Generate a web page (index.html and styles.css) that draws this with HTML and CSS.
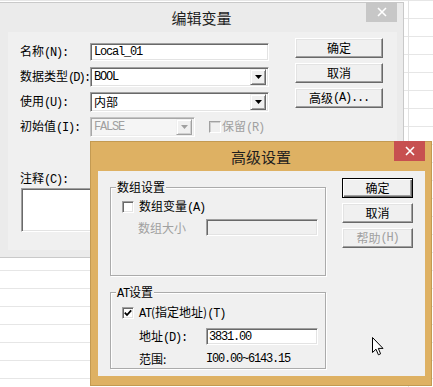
FILE: index.html
```html
<!DOCTYPE html>
<html lang="zh-CN">
<head>
<meta charset="utf-8">
<title>编辑变量</title>
<link rel="stylesheet" href="styles.css">
</head>
<body>
<div class="win win1">
  <div class="titlebar">
    <span class="title">编辑变量</span>
    <span class="close close-gray"><svg width="10" height="10" viewBox="0 0 10 10"><path d="M1 1L9 9M9 1L1 9" stroke="#fff" stroke-width="1.6"/></svg></span>
  </div>
  <div class="client c1">
    <div class="form">
      <div class="row">
        <span class="lbl">名称<span class="m">(N):</span></span>
        <div class="edit sunken w179"><span class="m">Local_01</span></div>
      </div>
      <div class="row">
        <span class="lbl">数据类型<span class="m tight">(D):</span></span>
        <div class="combo sunken w179"><span class="val m">BOOL</span><span class="dd"><svg width="7" height="4" viewBox="0 0 7 4"><path d="M0 0H7L3.5 4Z" fill="#000"/></svg></span></div>
      </div>
      <div class="row">
        <span class="lbl">使用<span class="m">(U):</span></span>
        <div class="combo sunken w179"><span class="val">内部</span><span class="dd"><svg width="7" height="4" viewBox="0 0 7 4"><path d="M0 0H7L3.5 4Z" fill="#000"/></svg></span></div>
      </div>
      <div class="row">
        <span class="lbl">初始值<span class="m">(I):</span></span>
        <div class="combo sunken disabled w105"><span class="val m">FALSE</span><span class="dd dd-dis"><svg width="7" height="4" viewBox="0 0 7 4"><path d="M0 0H7L3.5 4Z" fill="#a0a0a0"/></svg></span></div>
        <span class="chk-dis"></span><span class="dis">保留<span class="m">(R)</span></span>
      </div>
      <div class="note-lbl">注释<span class="m">(C):</span></div>
      <div class="memo sunken"></div>
    </div>
    <div class="btns b1">
      <div class="btn">确定</div>
      <div class="btn">取消</div>
      <div class="btn">高级<span class="m">(A)...</span></div>
    </div>
  </div>
</div>

<div class="win win2">
  <div class="titlebar">
    <span class="title">高级设置</span>
    <span class="close close-red"><svg width="10" height="10" viewBox="0 0 10 10"><path d="M1 1L9 9M9 1L1 9" stroke="#fff" stroke-width="1.6"/></svg></span>
  </div>
  <div class="client c2">
    <div class="groups">
      <div class="grp grp1">
        <div class="legend">数组设置</div>
        <div class="grow g1r1">
          <span class="chk sunken"></span><span>数组变量<span class="m">(A)</span></span>
        </div>
        <div class="grow g1r2">
          <span class="glbl dis">数组大小</span>
          <div class="edit sunken edit-dis w112"></div>
        </div>
      </div>
      <div class="grp grp2">
        <div class="legend"><span class="m">AT</span>设置</div>
        <div class="grow g2r1">
          <span class="chk sunken"><svg width="8" height="8" viewBox="0 0 8 8"><path d="M0.8 3.6L3 6L7.2 1.4" fill="none" stroke="#000" stroke-width="1.8"/></svg></span><span><span class="m">AT</span>(指定地址)<span class="m">(T)</span></span>
        </div>
        <div class="grow g2r2">
          <span class="glbl2">地址<span class="m">(D):</span></span>
          <div class="edit sunken w112"><span class="m">3831.00</span></div>
        </div>
        <div class="grow g2r3">
          <span class="glbl2">范围:</span>
          <span class="m">I00.00~6143.15</span>
        </div>
      </div>
    </div>
    <div class="btns b2">
      <div class="btn def">确定</div>
      <div class="btn">取消</div>
      <div class="btn dis">帮助<span class="m">(H)</span></div>
    </div>
  </div>
</div>

<svg class="cursor" width="12" height="19" viewBox="0 0 12 19"><path d="M0.5 0.5V15.5L4 12.2L6.4 17.8L8.6 16.8L6.3 11.4H11Z" fill="#fff" stroke="#000" stroke-width="1" stroke-linejoin="miter"/></svg>
</body>
</html>
```

FILE: styles.css
```css
* { box-sizing: border-box; }
html, body { margin: 0; padding: 0; }
body {
  width: 433px;
  height: 387px;
  overflow: hidden;
  position: relative;
  background-color: #fff;
  background-image:
    linear-gradient(to right, transparent 408px, #e2e2e2 408px, #e2e2e2 409px, transparent 409px),
    repeating-linear-gradient(to bottom, #e6e6e6 0, #e6e6e6 1px, transparent 1px, transparent 18px);
  font-family: "Noto Sans CJK SC", "Noto Sans", sans-serif;
  font-size: 12px;
  line-height: 14px;
  color: #000;
}
.m { font-family: "Liberation Mono", monospace; letter-spacing: -1.2px; }
.m.tight { letter-spacing: -1.9px; }

.win { position: absolute; display: flex; flex-direction: column; }
.win1 { left: -1px; top: 2px; width: 405px; height: 256px; background: #ebebeb; border: 1px solid #c9c9c9; }
.win2 { left: 90px; top: 141px; width: 342px; height: 245px; background: #deb163; border: 1px solid #c39a52; }

.titlebar { height: 29px; flex: none; position: relative; display: flex; align-items: center; justify-content: center; }
.title { font-size: 15px; line-height: 20px; color: #1e1e1e; }
.close { position: absolute; top: -1px; right: 6px; width: 31px; height: 20px; display: flex; align-items: center; justify-content: center; }
.close-gray { background: #c7c7c7; }
.close-red { background: #c75050; }

.client { flex: 1; background: #f0f0f0; display: flex; align-items: flex-start; }
.c1 { margin: 0 6px 7px 8px; padding: 6px 0 0 12px; }
.c2 { margin: 0 6px 9px 7px; padding: 7px 0 0 12px; }

.form { width: 257px; flex: none; padding-top: 4px; }
.row { display: flex; align-items: center; height: 20px; margin-bottom: 5px; white-space: nowrap; }
.lbl { width: 70px; flex: none; position: relative; z-index: 1; }

.sunken {
  border: 1px solid;
  border-color: #a0a0a0 #fff #fff #a0a0a0;
  box-shadow: inset 1px 1px 0 #696969, inset -1px -1px 0 #e3e3e3;
}
.edit { height: 18px; background: #fff; padding-left: 3px; display: flex; align-items: center; flex: none; }
.edit-dis { background: #f0f0f0; height: 17px; }
.combo { height: 20px; background: #fff; display: flex; align-items: center; padding: 1px 2px 1px 1px; flex: none; }
.combo .val { flex: 1; padding-left: 2px; }
.combo.disabled { background: #f5f5f5; color: #a0a0a0; border-color: #c4c4c4 #fff #fff #c4c4c4; box-shadow: inset 1px 1px 0 #a8a8a8, inset -1px -1px 0 #ececec; }
.dd {
  width: 16px; height: 16px; flex: none;
  background: #f0f0f0;
  border: 1px solid;
  border-color: #f0f0f0 #696969 #696969 #f0f0f0;
  box-shadow: inset 1px 1px 0 #fff, inset -1px -1px 0 #a0a0a0;
  display: flex; align-items: center; justify-content: center;
}
.dd-dis { border-color: #f0f0f0 #a0a0a0 #a0a0a0 #f0f0f0; box-shadow: inset 1px 1px 0 #fff, inset -1px -1px 0 #d0d0d0; }
.w179 { width: 179px; }
.w105 { width: 105px; }
.w112 { width: 112px; }

.chk-dis {
  width: 12px; height: 12px; flex: none;
  margin-left: 14px; margin-right: 1px;
  border-top: 1px solid #a0a0a0; border-left: 1px solid #a0a0a0;
  border-right: 1px solid #fff; border-bottom: 1px solid #fff;
  box-shadow: inset 1px 1px 0 #cfcfcf;
}
.dis { color: #a0a0a0; }

.note-lbl { margin-top: 34px; height: 14px; white-space: nowrap; }
.memo { margin: 3px 0 0 1px; width: 250px; height: 44px; background: #fff; }

.btns { display: flex; flex-direction: column; gap: 5px; flex: none; }
.b1 { margin-left: 18px; }
.b2 { margin-left: 16px; }
.btn {
  width: 88px; height: 20px;
  background: #f0f0f0;
  border: 1px solid;
  border-color: #fff #696969 #696969 #fff;
  box-shadow: inset -1px -1px 0 #a0a0a0, inset 1px 1px 0 #e3e3e3;
  display: flex; align-items: center; justify-content: center;
  white-space: nowrap;
}
.b2 .btn { width: 71px; }
.btn.def { border-color: #000; box-shadow: inset 1px 1px 0 #fff, inset -1px -1px 0 #696969, inset -2px -2px 0 #a0a0a0; }
.btn.dis { color: #a0a0a0; }

.groups { width: 216px; flex: none; padding-top: 9px; }
.grp { border: 1px solid #ababab; box-shadow: 1px 1px 0 #fff, inset 1px 1px 0 #fff; }
.grp1 { height: 89px; }
.grp2 { height: 77px; margin-top: 16px; }
.legend { width: fit-content; margin: -8px 0 0 5px; padding: 0 1px; background: #f0f0f0; line-height: 14px; white-space: nowrap; }
.grow { display: flex; align-items: center; white-space: nowrap; }
.chk { width: 12px; height: 12px; flex: none; background: #fff; margin-right: 5px; display: flex; align-items: center; justify-content: center; }
.g1r1 { margin-top: 6px; height: 14px; padding-left: 11px; }
.g1r2 { margin-top: 5px; height: 17px; padding-left: 27px; }
.glbl { width: 68px; flex: none; }
.g2r1 { margin-top: 5px; height: 14px; padding-left: 11px; }
.g2r2 { margin-top: 8px; height: 17px; padding-left: 28px; }
.g2r3 { margin-top: 7px; height: 14px; padding-left: 28px; }
.glbl2 { width: 67px; flex: none; }
.g2r2 .edit { height: 17px; padding-left: 2px; }

.cursor { position: absolute; left: 372px; top: 337px; }
```
